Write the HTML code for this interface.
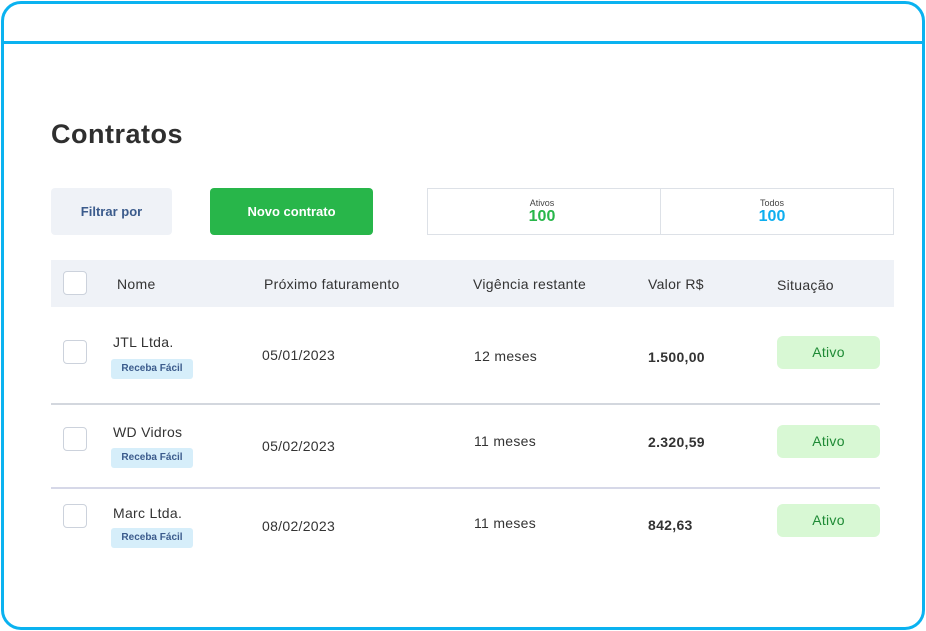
<!DOCTYPE html>
<html><head><meta charset="utf-8"><style>
*{margin:0;padding:0;box-sizing:border-box}
body{width:926px;height:631px;background:#fff;font-family:"Liberation Sans",sans-serif;position:relative;overflow:hidden;color:#333}
.a{position:absolute}
.frame{left:1px;top:1px;width:924px;height:629px;border:3px solid #0ab2f0;border-radius:20px}
.hl{left:2px;top:41px;width:922px;height:3px;background:#0ab2f0}
.cb{width:24px;height:24px;border:1px solid #ccd2dc;border-radius:4px;background:#fff}
.tag{width:82px;height:20px;background:#d6eefa;border-radius:3px;color:#3b5b8c;font-size:10px;font-weight:bold;text-align:center;line-height:20px}
.badge{left:777px;width:103px;height:33px;background:#d8f8d4;border-radius:6px;color:#1e8a35;font-size:14px;text-align:center;line-height:33px;letter-spacing:0.3px}
.t{font-size:14px;color:#333;letter-spacing:0.3px}
.sep{left:51px;width:829px;height:2px;background:#d3d7de}
</style></head><body>
<div class="a frame"></div>
<div class="a hl"></div>
<div class="a" style="left:51px;top:119px;font-size:27px;font-weight:bold;color:#2f2f2f;letter-spacing:0.5px">Contratos</div>
<div class="a" style="left:51px;top:188px;width:121px;height:47px;background:#eff2f7;border-radius:4px;color:#3b5b8c;font-size:13px;font-weight:bold;text-align:center;line-height:47px">Filtrar por</div>
<div class="a" style="left:210px;top:188px;width:163px;height:47px;background:#28b64a;border-radius:4px;color:#fff;font-size:13px;font-weight:bold;text-align:center;line-height:47px">Novo contrato</div>
<div class="a" style="left:427px;top:188px;width:467px;height:47px;border:1px solid #dde1e7"></div>
<div class="a" style="left:660px;top:188px;width:1px;height:47px;background:#dde1e7"></div>
<div class="a" style="left:428px;top:198px;width:228px;text-align:center;font-size:9px;color:#444">Ativos</div>
<div class="a" style="left:428px;top:208px;width:228px;text-align:center;font-size:16px;font-weight:bold;color:#28b64a">100</div>
<div class="a" style="left:661px;top:198px;width:222px;text-align:center;font-size:9px;color:#444">Todos</div>
<div class="a" style="left:661px;top:208px;width:222px;text-align:center;font-size:16px;font-weight:bold;color:#0eaeef">100</div>
<div class="a" style="left:51px;top:260px;width:843px;height:47px;background:#eff2f7"></div>
<div class="a cb" style="left:63px;top:271px"></div>
<div class="a t" style="left:117px;top:276px">Nome</div>
<div class="a t" style="left:264px;top:276px">Próximo faturamento</div>
<div class="a t" style="left:473px;top:276px">Vigência restante</div>
<div class="a t" style="left:648px;top:276px">Valor R$</div>
<div class="a t" style="left:777px;top:277px">Situação</div>

<div class="a cb" style="left:63px;top:340px"></div>
<div class="a t" style="left:113px;top:334px">JTL Ltda.</div>
<div class="a tag" style="left:111px;top:359px">Receba Fácil</div>
<div class="a t" style="left:262px;top:347px">05/01/2023</div>
<div class="a t" style="left:474px;top:348px">12 meses</div>
<div class="a t" style="left:648px;top:349px;font-weight:bold">1.500,00</div>
<div class="a badge" style="top:336px">Ativo</div>
<div class="a sep" style="top:403px"></div>

<div class="a cb" style="left:63px;top:427px"></div>
<div class="a t" style="left:113px;top:424px">WD Vidros</div>
<div class="a tag" style="left:111px;top:448px">Receba Fácil</div>
<div class="a t" style="left:262px;top:438px">05/02/2023</div>
<div class="a t" style="left:474px;top:433px">11 meses</div>
<div class="a t" style="left:648px;top:434px;font-weight:bold">2.320,59</div>
<div class="a badge" style="top:425px">Ativo</div>
<div class="a sep" style="top:487px;background:#d6d8e8"></div>

<div class="a cb" style="left:63px;top:504px"></div>
<div class="a t" style="left:113px;top:505px">Marc Ltda.</div>
<div class="a tag" style="left:111px;top:528px">Receba Fácil</div>
<div class="a t" style="left:262px;top:518px">08/02/2023</div>
<div class="a t" style="left:474px;top:515px">11 meses</div>
<div class="a t" style="left:648px;top:517px;font-weight:bold">842,63</div>
<div class="a badge" style="top:504px">Ativo</div>
</body></html>
